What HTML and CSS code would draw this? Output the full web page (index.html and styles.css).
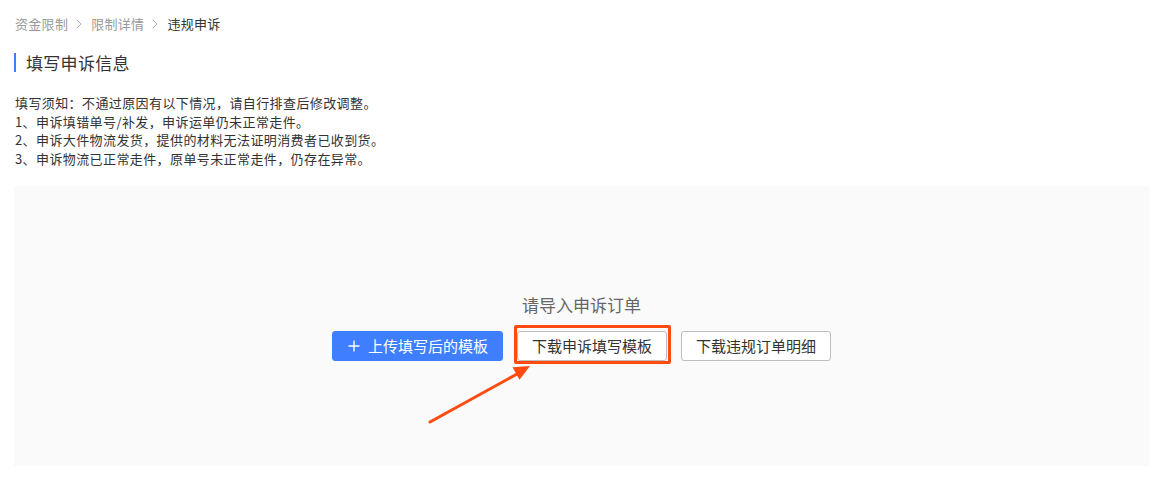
FILE: index.html
```html
<!DOCTYPE html>
<html lang="zh-CN">
<head>
<meta charset="utf-8">
<title>填写申诉信息</title>
<link rel="stylesheet" href="styles.css">
</head>
<body>
<div class="page">
  <nav class="crumbs">
    <span class="crumb">资金限制</span>
    <svg class="sep" viewBox="0 0 6 10" width="6" height="10"><path d="M0.8 0.8L5 5L0.8 9.2" stroke="#b0b0b0" stroke-width="1" fill="none"/></svg>
    <span class="crumb">限制详情</span>
    <svg class="sep" viewBox="0 0 6 10" width="6" height="10"><path d="M0.8 0.8L5 5L0.8 9.2" stroke="#b0b0b0" stroke-width="1" fill="none"/></svg>
    <span class="crumb current">违规申诉</span>
  </nav>
  <h2 class="title">填写申诉信息</h2>
  <div class="notice">
    <p>填写须知：不通过原因有以下情况，请自行排查后修改调整。</p>
    <p>1、申诉填错单号/补发，申诉运单仍未正常走件。</p>
    <p>2、申诉大件物流发货，提供的材料无法证明消费者已收到货。</p>
    <p>3、申诉物流已正常走件，原单号未正常走件，仍存在异常。</p>
  </div>
  <section class="upload">
    <div class="upload-title">请导入申诉订单</div>
    <div class="actions">
      <button class="btn btn-primary"><svg class="plus" viewBox="0 0 12 12" width="12" height="12"><path d="M6 0.5V11.5M0.5 6H11.5" stroke="#fff" stroke-width="1.4" fill="none"/></svg>上传填写后的模板</button>
      <button class="btn btn-default highlighted">下载申诉填写模板</button>
      <button class="btn btn-default">下载违规订单明细</button>
    </div>
    <svg class="arrow" viewBox="0 0 130 80" width="130" height="80">
      <line x1="6" y1="66" x2="93" y2="18" stroke="#ff4a10" stroke-width="3" stroke-linecap="round"/>
      <polygon points="106,10 95.5,23.8 88.5,11.2" fill="#ff4a10"/>
    </svg>
  </section>
</div>
</body>
</html>
```

FILE: styles.css
```css
* { box-sizing: border-box; }
html, body { margin: 0; padding: 0; background: #fff; }
body {
  font-family: "Noto Sans CJK SC", "Noto Sans", "Liberation Sans", sans-serif;
  color: #333;
}
.page {
  padding: 14px 17px 0 14px;
}
.crumbs {
  display: flex;
  align-items: center;
  font-size: 13px;
  line-height: 20px;
  color: #999;
  padding-left: 1px;
  letter-spacing: 0.3px;
}
.sep {
  margin: 0 9px 0 8px;
}
.crumb.current { color: #333; }
.title {
  margin: 19px 0 0 0;
  font-size: 17px;
  font-weight: normal;
  line-height: 19px;
  color: #333;
  border-left: 2px solid #3f7bff;
  padding-left: 10px;
  letter-spacing: 0.3px;
}
.notice {
  margin-top: 22px;
  font-size: 13px;
  line-height: 18.5px;
  color: #333;
  padding-left: 1px;
  letter-spacing: 0.4px;
}
.notice p { margin: 0; }
.upload {
  position: relative;
  margin-top: 18px;
  height: 280px;
  background: #fafafa;
  display: flex;
  flex-direction: column;
  align-items: center;
  justify-content: center;
  padding-top: 4px;
}
.upload-title {
  font-size: 17px;
  line-height: 20px;
  color: #666;
}
.actions {
  margin-top: 16px;
  display: flex;
  gap: 14px;
}
.btn {
  height: 30px;
  padding: 0 14px;
  font-family: inherit;
  font-size: 15px;
  line-height: 28px;
  border-radius: 3px;
  display: inline-flex;
  align-items: center;
  cursor: pointer;
}
.btn-primary {
  background: #3f7fff;
  border: 1px solid #3f7fff;
  color: #fff;
  padding-left: 15px;
}
.plus { margin-right: 8px; }
.btn-default {
  background: #fff;
  border: 1px solid #bdbdbd;
  color: #333;
}
.highlighted { position: relative; }
.highlighted::after {
  content: "";
  position: absolute;
  left: -4px;
  right: -5px;
  top: -7px;
  bottom: -4px;
  border: 3px solid #ff4a10;
  border-radius: 2px;
  pointer-events: none;
}
.arrow {
  position: absolute;
  left: 410px;
  top: 170px;
}
```
